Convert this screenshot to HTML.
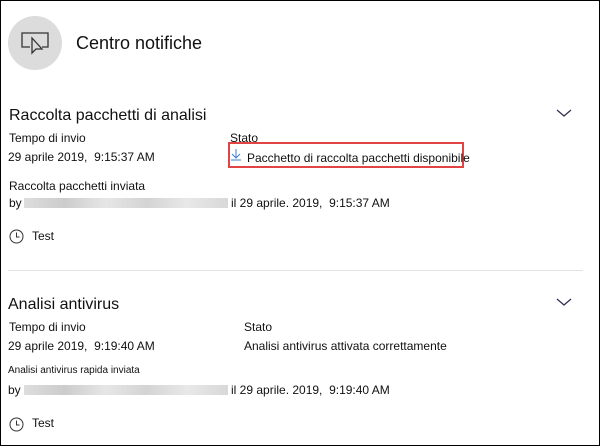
<!DOCTYPE html><html><head><style>
body{margin:0;width:600px;height:446px;overflow:hidden;background:#fff;font-family:"Liberation Sans",sans-serif;color:#111}
.f{position:absolute;left:0;top:0;width:598px;height:444px;border:1px solid #000}
.t{position:absolute;white-space:nowrap;font-size:12px}
.blur{position:absolute;height:10px;background:linear-gradient(90deg,#ddd,#ccc 20%,#e6e6e6 40%,#d4d4d4 60%,#e8e8e8 80%,#d8d8d8)}
</style></head><body><div class="f"></div>
<div style="position:absolute;left:8px;top:16px;width:54px;height:54px;border-radius:50%;background:#dcdcdc"></div>
<svg style="position:absolute;left:20px;top:30px" width="30" height="26" viewBox="0 0 30 26" fill="none" stroke="#333" stroke-width="1.3"><path d="M10 17H2V3h26v14h-6"/><path d="M12 8v15l4-4h6z"/></svg>
<div class="t" style="left:76px;top:33px;font-size:18px">Centro notifiche</div>
<div class="t" style="left:9px;top:107px;font-size:16px">Raccolta pacchetti di analisi</div>
<svg style="position:absolute;left:556px;top:109px" width="16" height="9"><path d="M1 1l7 6 7-6" fill="none" stroke="#335" stroke-width="1.3"/></svg>
<div class="t" style="left:9px;top:131px">Tempo di invio</div>
<div class="t" style="left:230px;top:131px">Stato</div>
<div class="t" style="left:8px;top:150px">29 aprile 2019,&nbsp; 9:15:37 AM</div>
<div style="position:absolute;left:228px;top:142px;width:232px;height:22px;border:2px solid #e04444"></div>
<svg style="position:absolute;left:231px;top:149px" width="10" height="12"><path d="M5 0v9M1 5l4 4 4-4M0 11h10" fill="none" stroke="#3a7fd0" stroke-width="1"/></svg>
<div class="t" style="left:247px;top:151px">Pacchetto di raccolta pacchetti disponibile</div>
<div class="t" style="left:9px;top:179px">Raccolta pacchetti inviata</div>
<div class="t" style="left:9px;top:196px">by</div>
<div class="blur" style="left:24px;top:198px;width:204px"></div>
<div class="t" style="left:231px;top:196px">il 29 aprile. 2019,&nbsp; 9:15:37 AM</div>
<svg style="position:absolute;left:9px;top:229px" width="15" height="15"><circle cx="7.5" cy="7.5" r="6.5" fill="none" stroke="#333"/><path d="M7.5 3.5v4.5h3" fill="none" stroke="#333"/></svg>
<div class="t" style="left:32px;top:229px">Test</div>
<div style="position:absolute;left:8px;top:270px;width:575px;height:1px;background:#e4e4e4"></div>
<div class="t" style="left:8px;top:296px;font-size:16px">Analisi antivirus</div>
<svg style="position:absolute;left:556px;top:298px" width="16" height="9"><path d="M1 1l7 6 7-6" fill="none" stroke="#335" stroke-width="1.3"/></svg>
<div class="t" style="left:9px;top:320px">Tempo di invio</div>
<div class="t" style="left:244px;top:320px">Stato</div>
<div class="t" style="left:8px;top:339px">29 aprile 2019,&nbsp; 9:19:40 AM</div>
<div class="t" style="left:244px;top:339px">Analisi antivirus attivata correttamente</div>
<div class="t" style="left:8px;top:365px;font-size:10px">Analisi antivirus rapida inviata</div>
<div class="t" style="left:8px;top:383px">by</div>
<div class="blur" style="left:24px;top:385px;width:204px"></div>
<div class="t" style="left:231px;top:383px">il 29 aprile. 2019,&nbsp; 9:19:40 AM</div>
<svg style="position:absolute;left:9px;top:417px" width="15" height="15"><circle cx="7.5" cy="7.5" r="6.5" fill="none" stroke="#333"/><path d="M7.5 3.5v4.5h3" fill="none" stroke="#333"/></svg>
<div class="t" style="left:32px;top:416px">Test</div>
</body></html>
